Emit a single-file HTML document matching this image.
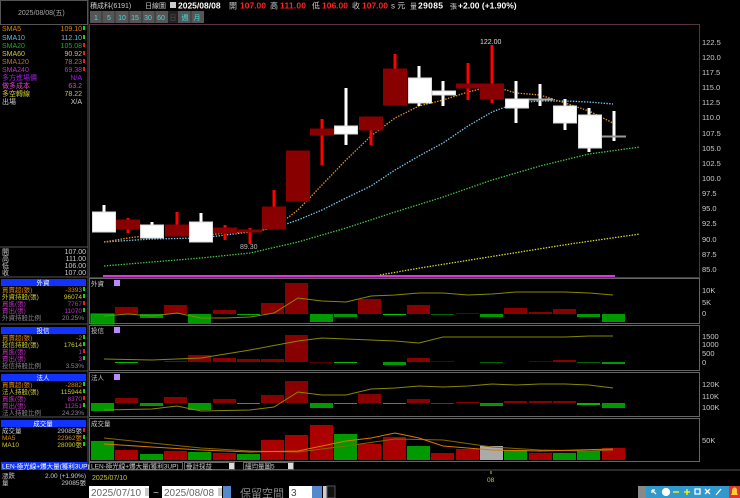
<!DOCTYPE html><html><head><meta charset="utf-8"><style>
html,body{margin:0;padding:0;background:#000;width:740px;height:498px;overflow:hidden}
svg{display:block;font-family:"Liberation Sans","Noto Sans CJK TC",sans-serif}
.s{font-size:7px}
</style></head><body>
<svg width="740" height="498" viewBox="0 0 740 498" xmlns="http://www.w3.org/2000/svg">
<rect width="740" height="498" fill="#000"/>
<rect x="0.5" y="0.5" width="87" height="24" fill="#000" stroke="#555"/>
<text x="18" y="15" class="s" fill="#aaa">2025/08/08(五)</text>
<line x1="88" y1="0" x2="88" y2="470" stroke="#555"/>
<text x="90" y="8" class="s" fill="#ccc">積成科(6191)</text>
<text x="145" y="8" class="s" fill="#ccc">日線圖</text>
<rect x="170" y="2" width="6" height="6" fill="#ccc"/>
<text x="178" y="8.5" font-size="8.5" font-weight="bold" fill="#fff">2025/08/08</text>
<text x="229" y="8.5" font-size="8" fill="#ccc">開</text><text x="240" y="8.5" font-size="8.5" font-weight="bold" fill="#f22" textLength="26">107.00</text>
<text x="270" y="8.5" font-size="8" fill="#ccc">高</text><text x="280" y="8.5" font-size="8.5" font-weight="bold" fill="#f22" textLength="26">111.00</text>
<text x="312" y="8.5" font-size="8" fill="#ccc">低</text><text x="322" y="8.5" font-size="8.5" font-weight="bold" fill="#f22" textLength="26">106.00</text>
<text x="352" y="8.5" font-size="8" fill="#ccc">收</text><text x="362" y="8.5" font-size="8.5" font-weight="bold" fill="#f22" textLength="26">107.00</text>
<text x="391" y="8.5" font-size="8" fill="#ccc">s 元</text>
<text x="410" y="8.5" font-size="7" fill="#ccc">量</text><text x="418" y="8.5" font-size="8.5" font-weight="bold" fill="#fff" textLength="25">29085</text>
<text x="450" y="8.5" font-size="7" fill="#ccc">張</text>
<text x="458" y="8.5" font-size="8.5" font-weight="bold" fill="#fff">+2.00 (+1.90%)</text>
<g font-size="7" fill="#4dd" text-anchor="middle">
<rect x="90" y="11" width="114" height="12" fill="#555"/>
<rect x="168" y="11" width="10" height="12" fill="#222"/>
<rect x="179" y="11" width="25" height="12" fill="#555"/>
<g stroke="#333"><line x1="102" y1="11" x2="102" y2="23"/><line x1="115" y1="11" x2="115" y2="23"/><line x1="129" y1="11" x2="129" y2="23"/><line x1="142" y1="11" x2="142" y2="23"/><line x1="155" y1="11" x2="155" y2="23"/><line x1="191" y1="11" x2="191" y2="23"/></g>
<text x="96" y="20">1</text><text x="109" y="20">5</text><text x="122" y="20">10</text><text x="135" y="20">15</text><text x="148" y="20">30</text><text x="161" y="20">60</text><text x="173" y="20" fill="#555">日</text><text x="185" y="20">週</text><text x="197" y="20">月</text>
</g>
<g font-size="7">
<text x="2" y="31" fill="#d80">SMA5</text><text x="82" y="31" fill="#d80" text-anchor="end">109.10</text>
<text x="2" y="40" fill="#6bd">SMA10</text><text x="82" y="40" fill="#6bd" text-anchor="end">112.10</text>
<text x="2" y="48" fill="#2a2">SMA20</text><text x="82" y="48" fill="#2a2" text-anchor="end">105.08</text>
<text x="2" y="56" fill="#cc3">SMA60</text><text x="82" y="56" fill="#cc3" text-anchor="end">90.92</text>
<text x="2" y="64" fill="#b74">SMA120</text><text x="82" y="64" fill="#b74" text-anchor="end">78.23</text>
<text x="2" y="72" fill="#b3b">SMA240</text><text x="82" y="72" fill="#b3b" text-anchor="end">69.38</text>
<text x="2" y="80" fill="#92d">多方進場價</text><text x="82" y="80" fill="#92d" text-anchor="end">N/A</text>
<text x="2" y="88" fill="#d4c">做多成本</text><text x="82" y="88" fill="#d4c" text-anchor="end">63.2</text>
<text x="2" y="96" fill="#cc3">多空轉線</text><text x="82" y="96" fill="#cc3" text-anchor="end">78.22</text>
<text x="2" y="104" fill="#ccc">出場</text><text x="82" y="104" fill="#ccc" text-anchor="end">X/A</text>
<rect x="83" y="26" width="2" height="4" fill="#2c2"/><rect x="83" y="35" width="2" height="4" fill="#2c2"/><rect x="83" y="43" width="2" height="4" fill="#d22"/><rect x="83" y="51" width="2" height="4" fill="#d22"/><rect x="83" y="59" width="2" height="4" fill="#d22"/><rect x="83" y="67" width="2" height="4" fill="#d22"/>
<line x1="0" y1="247" x2="88" y2="247" stroke="#555"/>
<text x="2" y="254" fill="#ccc">開</text><text x="86" y="254" fill="#ccc" text-anchor="end">107.00</text>
<text x="2" y="261" fill="#ccc">高</text><text x="86" y="261" fill="#ccc" text-anchor="end">111.00</text>
<text x="2" y="268" fill="#ccc">低</text><text x="86" y="268" fill="#ccc" text-anchor="end">106.00</text>
<text x="2" y="275" fill="#ccc">收</text><text x="86" y="275" fill="#ccc" text-anchor="end">107.00</text>
</g>
<g font-size="6.5">
<line x1="0" y1="277" x2="88" y2="277" stroke="#555"/>
<rect x="1" y="279" width="85" height="7" fill="#13f"/><text x="43" y="285" fill="#fff" text-anchor="middle">外資</text>
<text x="2" y="292" fill="#d80">買賣超(張)</text><text x="82" y="292" fill="#d80" text-anchor="end">-3393</text>
<text x="2" y="299" fill="#cc3">外資持股(張)</text><text x="82" y="299" fill="#cc3" text-anchor="end">96074</text>
<text x="2" y="306" fill="#b3b">買進(張)</text><text x="82" y="306" fill="#b3b" text-anchor="end">7767</text>
<text x="2" y="313" fill="#b3b">賣出(張)</text><text x="82" y="313" fill="#b3b" text-anchor="end">11070</text>
<text x="2" y="320" fill="#888">外資持股比例</text><text x="84" y="320" fill="#888" text-anchor="end">20.25%</text>
<line x1="0" y1="324" x2="88" y2="324" stroke="#555"/>
<rect x="1" y="327" width="85" height="7" fill="#13f"/><text x="43" y="333" fill="#fff" text-anchor="middle">投信</text>
<text x="2" y="340" fill="#d80">買賣超(張)</text><text x="82" y="340" fill="#d80" text-anchor="end">-2</text>
<text x="2" y="347" fill="#cc3">投信持股(張)</text><text x="82" y="347" fill="#cc3" text-anchor="end">17614</text>
<text x="2" y="354" fill="#b3b">買進(張)</text><text x="82" y="354" fill="#b3b" text-anchor="end">1</text>
<text x="2" y="361" fill="#b3b">賣出(張)</text><text x="82" y="361" fill="#b3b" text-anchor="end">3</text>
<text x="2" y="368" fill="#888">投信持股比例</text><text x="84" y="368" fill="#888" text-anchor="end">3.53%</text>
<line x1="0" y1="371" x2="88" y2="371" stroke="#555"/>
<rect x="1" y="374" width="85" height="7" fill="#13f"/><text x="43" y="380" fill="#fff" text-anchor="middle">法人</text>
<text x="2" y="387" fill="#d80">買賣超(張)</text><text x="82" y="387" fill="#d80" text-anchor="end">-2882</text>
<text x="2" y="394" fill="#cc3">法人持股(張)</text><text x="82" y="394" fill="#cc3" text-anchor="end">115944</text>
<text x="2" y="401" fill="#b3b">買進(張)</text><text x="82" y="401" fill="#b3b" text-anchor="end">8370</text>
<text x="2" y="408" fill="#b3b">賣出(張)</text><text x="82" y="408" fill="#b3b" text-anchor="end">11251</text>
<text x="2" y="415" fill="#888">法人持股比例</text><text x="84" y="415" fill="#888" text-anchor="end">24.23%</text>
<line x1="0" y1="417" x2="88" y2="417" stroke="#555"/>
<rect x="1" y="420" width="85" height="7" fill="#13f"/><text x="43" y="426" fill="#fff" text-anchor="middle">成交量</text>
<text x="2" y="433" fill="#ccc">成交量</text><text x="82" y="433" fill="#ccc" text-anchor="end">29085張</text>
<text x="2" y="440" fill="#d80">MA5</text><text x="82" y="440" fill="#d80" text-anchor="end">22962張</text>
<text x="2" y="447" fill="#cc3">MA10</text><text x="82" y="447" fill="#cc3" text-anchor="end">28090張</text>
<rect x="1" y="462" width="86" height="8" fill="#13f"/><text x="2" y="468.5" fill="#fff">LEN-極光線+爆大量(獲利3UP)</text>
<text x="2" y="478" fill="#ccc">漲跌</text><text x="86" y="478" fill="#ccc" text-anchor="end">2.00 (+1.90%)</text>
<text x="2" y="485" fill="#ccc">量</text><text x="86" y="485" fill="#ccc" text-anchor="end">29085張</text>
</g>
<g>
<rect x="83" y="287" width="2" height="4" fill="#2c2"/><rect x="83" y="294" width="2" height="4" fill="#2c2"/><rect x="83" y="301" width="2" height="4" fill="#d22"/><rect x="83" y="308" width="2" height="4" fill="#2c2"/>
<rect x="83" y="335" width="2" height="4" fill="#2c2"/><rect x="83" y="342" width="2" height="4" fill="#2c2"/><rect x="83" y="349" width="2" height="4" fill="#d22"/><rect x="83" y="356" width="2" height="4" fill="#2c2"/>
<rect x="83" y="382" width="2" height="4" fill="#2c2"/><rect x="83" y="389" width="2" height="4" fill="#2c2"/><rect x="83" y="396" width="2" height="4" fill="#d22"/><rect x="83" y="403" width="2" height="4" fill="#2c2"/>
<rect x="83" y="428" width="2" height="4" fill="#d22"/><rect x="83" y="435" width="2" height="4" fill="#2c2"/><rect x="83" y="442" width="2" height="4" fill="#2c2"/>
</g>
<rect x="89.5" y="24.5" width="610" height="253" fill="none" stroke="#534"/>
<g font-size="7.5" fill="#ccc">
<text x="702" y="45">122.5</text><text x="702" y="60">120.0</text><text x="702" y="75">117.5</text><text x="702" y="90">115.0</text><text x="702" y="105">112.5</text><text x="702" y="120">110.0</text><text x="702" y="136">107.5</text><text x="702" y="151">105.0</text><text x="702" y="166">102.5</text><text x="702" y="181">100.0</text><text x="702" y="196">97.5</text><text x="702" y="211">95.0</text><text x="702" y="226">92.5</text><text x="702" y="242">90.0</text><text x="702" y="257">87.5</text><text x="702" y="272">85.0</text>
</g>
<line x1="103" y1="276" x2="615" y2="276" stroke="#d3d" stroke-width="2"/>
<g fill="none" stroke-width="1.3" stroke-dasharray="1.4,1.4">
<polyline stroke="#4c4" points="104,266 152,262 201,258 250,253 298,242 346,228 395,212 443,197 492,180 540,166 589,154 640,147"/>
<polyline stroke="#dd3" points="380,275 420,268 470,260 520,252 570,244 640,234"/>
<polyline stroke="#7ce" points="104,242 152,239 201,238 250,232 274,228 298,220 322,210 346,198 371,186 395,170 419,156 443,143 468,126 492,112 516,103 540,101 565,101 589,102 613,104"/>
<polyline stroke="#e92" points="104,242 128,238 152,235 177,233 201,236 225,233 250,232 274,228 298,210 322,185 346,160 371,136 395,118 419,106 443,100 468,92 492,86 516,93 540,95 565,103 589,111 613,123"/>
</g>
<g stroke-width="3">
<line x1="104" y1="205" x2="104" y2="232" stroke="#fff"/>
<line x1="128" y1="218" x2="128" y2="233" stroke="#f00"/>
<line x1="152" y1="222" x2="152" y2="238" stroke="#fff"/>
<line x1="177" y1="212" x2="177" y2="236" stroke="#f00"/>
<line x1="201" y1="213" x2="201" y2="242" stroke="#fff"/>
<line x1="225" y1="225" x2="225" y2="240" stroke="#f00"/>
<line x1="250" y1="228" x2="250" y2="244" stroke="#f00"/>
<line x1="274" y1="190" x2="274" y2="229" stroke="#f00"/>
<line x1="322" y1="119" x2="322" y2="165" stroke="#f00"/>
<line x1="346" y1="88" x2="346" y2="145" stroke="#fff"/>
<line x1="371" y1="117" x2="371" y2="145" stroke="#f00"/>
<line x1="395" y1="54" x2="395" y2="105" stroke="#f00"/>
<line x1="419" y1="66" x2="419" y2="106" stroke="#fff"/>
<line x1="443" y1="81" x2="443" y2="106" stroke="#fff"/>
<line x1="468" y1="63" x2="468" y2="100" stroke="#f00"/>
<line x1="492" y1="45" x2="492" y2="103" stroke="#f00"/>
<line x1="516" y1="81" x2="516" y2="123" stroke="#fff"/>
<line x1="540" y1="84" x2="540" y2="106" stroke="#fff"/>
<line x1="565" y1="99" x2="565" y2="130" stroke="#fff"/>
<line x1="589" y1="108" x2="589" y2="152" stroke="#fff"/>
<line x1="614" y1="111" x2="614" y2="141" stroke="#fff"/>
</g>
<g stroke="#800" stroke-width="1">
<rect x="92.5" y="212" width="23" height="20" fill="#fff" stroke="#ddd"/>
<rect x="116.5" y="220" width="23" height="9" fill="#800"/>
<rect x="140.5" y="225" width="23" height="13" fill="#fff" stroke="#ddd"/>
<rect x="165.5" y="225" width="23" height="11" fill="#800"/>
<rect x="189.5" y="222" width="23" height="20" fill="#fff" stroke="#ddd"/>
<rect x="213.5" y="228" width="23" height="5" fill="#800"/>
<rect x="238.5" y="230" width="23" height="2" fill="#800"/>
<rect x="262.5" y="207" width="23" height="22" fill="#800"/>
<rect x="286.5" y="151" width="23" height="50" fill="#800"/>
<rect x="310.5" y="129" width="23" height="6" fill="#800"/>
<rect x="334.5" y="126" width="23" height="8" fill="#fff" stroke="#ddd"/>
<rect x="359.5" y="117" width="23" height="13" fill="#800"/>
<rect x="383.5" y="69" width="23" height="36" fill="#800"/>
<rect x="408.5" y="78" width="23" height="25" fill="#fff" stroke="#ddd"/>
<rect x="432.5" y="91" width="23" height="4" fill="#fff" stroke="#ddd"/>
<rect x="456.5" y="84" width="23" height="4" fill="#800"/>
<rect x="480.5" y="84" width="23" height="15" fill="#800"/>
<rect x="505.5" y="99" width="23" height="9" fill="#fff" stroke="#ddd"/>
<rect x="529.5" y="99" width="23" height="1" fill="#aaa" stroke="#aaa"/>
<rect x="553.5" y="106" width="23" height="17" fill="#fff" stroke="#ddd"/>
<rect x="578.5" y="115" width="23" height="33" fill="#fff" stroke="#ddd"/>
<rect x="602.5" y="136" width="23" height="1" fill="#999" stroke="#999"/>
</g>
<text x="480" y="44" font-size="7" fill="#ddd">122.00</text>
<text x="240" y="249" font-size="7" fill="#bbb">89.30</text>
<g fill="none" stroke="#666">
<rect x="89.5" y="278.5" width="610" height="45"/>
<rect x="89.5" y="325.5" width="610" height="45"/>
<rect x="89.5" y="372.5" width="610" height="44"/>
<rect x="89.5" y="418.5" width="610" height="43"/>
</g>
<g font-size="6.5" fill="#ccc">
<text x="91" y="286">外資</text><text x="91" y="333">投信</text><text x="91" y="380">法人</text><text x="91" y="426">成交量</text>
</g>
<rect x="114" y="280" width="6" height="6" fill="#b8f"/><rect x="114" y="327" width="6" height="6" fill="#b8f"/><rect x="114" y="374" width="6" height="6" fill="#b8f"/>
<g font-size="7.5" fill="#ccc">
<text x="702" y="293">10K</text><text x="702" y="305">5K</text><text x="702" y="316">0</text>
<text x="702" y="339">1500</text><text x="702" y="347">1000</text><text x="702" y="356">500</text><text x="702" y="365">0</text>
<text x="702" y="387">120K</text><text x="702" y="399">110K</text><text x="702" y="410">100K</text>
<text x="702" y="443">50K</text><text x="702" y="469">50</text>
</g>
<g>
<rect x="91" y="314" width="23" height="10" fill="#090" stroke="#0b0"/>
<rect x="115" y="307" width="23" height="7" fill="#800"/>
<rect x="140" y="314" width="23" height="4" fill="#090"/>
<rect x="164" y="305" width="23" height="9" fill="#800"/>
<rect x="188" y="314" width="23" height="10" fill="#090"/>
<rect x="213" y="310" width="23" height="4" fill="#800"/>
<rect x="237" y="314" width="23" height="1" fill="#0a0"/>
<rect x="261" y="303" width="23" height="11" fill="#800"/>
<rect x="285" y="283" width="23" height="31" fill="#800"/>
<rect x="310" y="314" width="23" height="8" fill="#090"/>
<rect x="334" y="314" width="23" height="3" fill="#090"/>
<rect x="358" y="299" width="23" height="15" fill="#800"/>
<rect x="383" y="314" width="23" height="1" fill="#0c0"/>
<rect x="407" y="305" width="23" height="9" fill="#800"/>
<rect x="431" y="314" width="23" height="1" fill="#060"/>
<rect x="456" y="313" width="23" height="1" fill="#600"/>
<rect x="480" y="314" width="23" height="3" fill="#090"/>
<rect x="504" y="308" width="23" height="6" fill="#800"/>
<rect x="529" y="312" width="23" height="2" fill="#800"/>
<rect x="553" y="309" width="23" height="5" fill="#800"/>
<rect x="577" y="314" width="23" height="3" fill="#090"/>
<rect x="602" y="314" width="23" height="8" fill="#090"/>
</g>
<polyline fill="none" stroke="#880" points="104,316 128,314 152,316 177,313 201,318 225,318 250,317 274,313 298,298 322,301 346,302 371,296 395,295 419,293 443,293 468,295 492,294 516,292 540,292 565,292 589,293 613,295"/>
<g>
<rect x="115" y="362" width="23" height="1" fill="#0b0"/>
<rect x="164" y="361" width="23" height="1" fill="#800"/>
<rect x="188" y="355" width="23" height="7" fill="#800"/>
<rect x="213" y="358" width="23" height="4" fill="#800"/>
<rect x="237" y="359" width="23" height="3" fill="#800"/>
<rect x="261" y="359" width="23" height="3" fill="#800"/>
<rect x="285" y="335" width="23" height="27" fill="#800"/>
<rect x="310" y="362" width="23" height="1" fill="#500"/>
<rect x="334" y="362" width="23" height="1" fill="#0b0"/>
<rect x="383" y="362" width="23" height="3" fill="#090"/>
<rect x="407" y="358" width="23" height="4" fill="#800"/>
<rect x="431" y="361" width="23" height="1" fill="#500"/>
<rect x="480" y="362" width="23" height="1" fill="#060"/>
<rect x="529" y="361" width="23" height="1" fill="#500"/>
<rect x="553" y="360" width="23" height="2" fill="#800"/>
<rect x="577" y="362" width="23" height="1" fill="#060"/>
<rect x="602" y="362" width="23" height="2" fill="#090"/>
</g>
<polyline fill="none" stroke="#880" points="104,359 152,360 201,358 250,350 298,341 322,338 346,339 371,340 395,341 419,343 443,337 468,337 492,337 516,337 540,337 565,337 589,336 613,336"/>
<g>
<rect x="91" y="403" width="23" height="8" fill="#090"/>
<rect x="115" y="398" width="23" height="5" fill="#800"/>
<rect x="140" y="403" width="23" height="3" fill="#090"/>
<rect x="164" y="397" width="23" height="6" fill="#800"/>
<rect x="188" y="403" width="23" height="7" fill="#090"/>
<rect x="213" y="399" width="23" height="4" fill="#800"/>
<rect x="237" y="403" width="23" height="1" fill="#0b0"/>
<rect x="261" y="395" width="23" height="8" fill="#800"/>
<rect x="285" y="381" width="23" height="22" fill="#800"/>
<rect x="310" y="403" width="23" height="5" fill="#090"/>
<rect x="334" y="403" width="23" height="1" fill="#0b0"/>
<rect x="358" y="394" width="23" height="9" fill="#800"/>
<rect x="383" y="403" width="23" height="1" fill="#0b0"/>
<rect x="407" y="399" width="23" height="4" fill="#800"/>
<rect x="431" y="403" width="23" height="1" fill="#060"/>
<rect x="456" y="402" width="23" height="1" fill="#800"/>
<rect x="480" y="403" width="23" height="3" fill="#090"/>
<rect x="504" y="401" width="23" height="2" fill="#800"/>
<rect x="529" y="401" width="23" height="2" fill="#800"/>
<rect x="553" y="401" width="23" height="2" fill="#800"/>
<rect x="577" y="403" width="23" height="2" fill="#0b0"/>
<rect x="602" y="403" width="23" height="5" fill="#090"/>
</g>
<polyline fill="none" stroke="#880" points="104,410 152,409 177,406 201,411 250,410 274,407 298,392 322,395 346,395 371,389 395,388 419,386 443,387 468,386 492,384 516,385 540,384 565,384 589,385 613,388"/>
<g>
<rect x="91" y="441" width="23" height="19" fill="#090"/>
<rect x="115" y="450" width="23" height="10" fill="#a00"/>
<rect x="140" y="454" width="23" height="6" fill="#090"/>
<rect x="164" y="451" width="23" height="9" fill="#a00"/>
<rect x="188" y="452" width="23" height="8" fill="#090"/>
<rect x="213" y="453" width="23" height="7" fill="#a00"/>
<rect x="237" y="454" width="23" height="6" fill="#090"/>
<rect x="261" y="440" width="23" height="20" fill="#a00"/>
<rect x="285" y="435" width="23" height="25" fill="#a00"/>
<rect x="310" y="425" width="23" height="35" fill="#a00"/>
<rect x="334" y="434" width="23" height="26" fill="#090"/>
<rect x="358" y="444" width="23" height="16" fill="#a00"/>
<rect x="383" y="437" width="23" height="23" fill="#a00"/>
<rect x="407" y="446" width="23" height="14" fill="#090"/>
<rect x="431" y="453" width="23" height="7" fill="#a00"/>
<rect x="456" y="449" width="23" height="11" fill="#a00"/>
<rect x="480" y="446" width="23" height="14" fill="#aaa"/>
<rect x="504" y="450" width="23" height="10" fill="#090"/>
<rect x="529" y="453" width="23" height="7" fill="#a00"/>
<rect x="553" y="453" width="23" height="7" fill="#090"/>
<rect x="577" y="451" width="23" height="9" fill="#090"/>
<rect x="602" y="448" width="23" height="12" fill="#a00"/>
</g>
<polyline fill="none" stroke="#860" points="104,438 152,443 201,448 250,451 298,452 346,446 395,439 443,440 492,447 540,450 589,451 613,450"/>
<polyline fill="none" stroke="#d70" points="104,444 152,447 201,450 250,452 298,451 346,441 371,438 395,433 419,438 443,446 492,450 540,451 613,449"/>
<rect x="89" y="462" width="651" height="8" fill="#000"/>
<line x1="89" y1="470" x2="740" y2="470" stroke="#555"/>
<g font-size="6.5" fill="#ccc">
<rect x="89.5" y="462.5" width="93" height="7" fill="#000" stroke="#666"/><text x="91" y="468.5">LEN-極光線+爆大量(獲利3UP)</text>
<rect x="184.5" y="462.5" width="50" height="7" fill="#000" stroke="#666"/><text x="186" y="468.5">疊計採益</text><rect x="229" y="463" width="5" height="6" fill="#ddd"/>
<rect x="243.5" y="462.5" width="50" height="7" fill="#000" stroke="#666"/><text x="245" y="468.5">細均量圖5</text><rect x="288" y="463" width="5" height="6" fill="#ddd"/>
</g>
<text x="92" y="480" font-size="7" fill="#cc3">2025/07/10</text>
<line x1="491" y1="471" x2="491" y2="474" stroke="#cc3"/>
<text x="487" y="482" font-size="6.5" fill="#cc3">08</text>
<rect x="89" y="486" width="60" height="12" fill="#fff"/><text x="91" y="496" font-size="10" fill="#666">2025/07/10</text><rect x="145" y="488" width="4" height="8" fill="#ccc"/>
<text x="153" y="496" font-size="10" fill="#ccc">~</text>
<rect x="162" y="486" width="60" height="12" fill="#fff"/><text x="164" y="496" font-size="10" fill="#666">2025/08/08</text><rect x="218" y="488" width="4" height="8" fill="#ccc"/>
<rect x="223" y="486" width="8" height="12" fill="#58c"/>
<text x="240" y="497" font-size="11" fill="#888">保留空間</text>
<rect x="289" y="486" width="23" height="12" fill="#fff"/><text x="291" y="496" font-size="10" fill="#444">3</text>
<rect x="312" y="486" width="10" height="12" fill="#58c"/><rect x="323" y="486" width="4" height="12" fill="#ccc"/>
<rect x="327" y="486" width="8" height="12" fill="#111" stroke="#555"/>
<rect x="638" y="486" width="8" height="12" fill="#888"/>
<rect x="646" y="486" width="83" height="12" fill="#39c"/>
<g stroke="#fff" stroke-width="1.3" fill="none">
<path d="M652 490l4 4M652 490h3M652 490v3"/>
<circle cx="666" cy="492" r="3.5" fill="#fff"/>
<path d="M673 492h6" stroke="#ff0"/>
<path d="M684 492h6M687 489v6" stroke="#ff0"/>
<path d="M695 489h5v5h-5z"/>
<path d="M705 489l5 5M710 489l-5 5"/>
<path d="M716 495l5-6"/>
</g>
<rect x="729" y="486" width="11" height="12" fill="#d33"/>
<path d="M731 495h7l-1-2v-3a2.5 2.5 0 0 0-5 0v3z" fill="#fc3"/>
</svg>
</body></html>
